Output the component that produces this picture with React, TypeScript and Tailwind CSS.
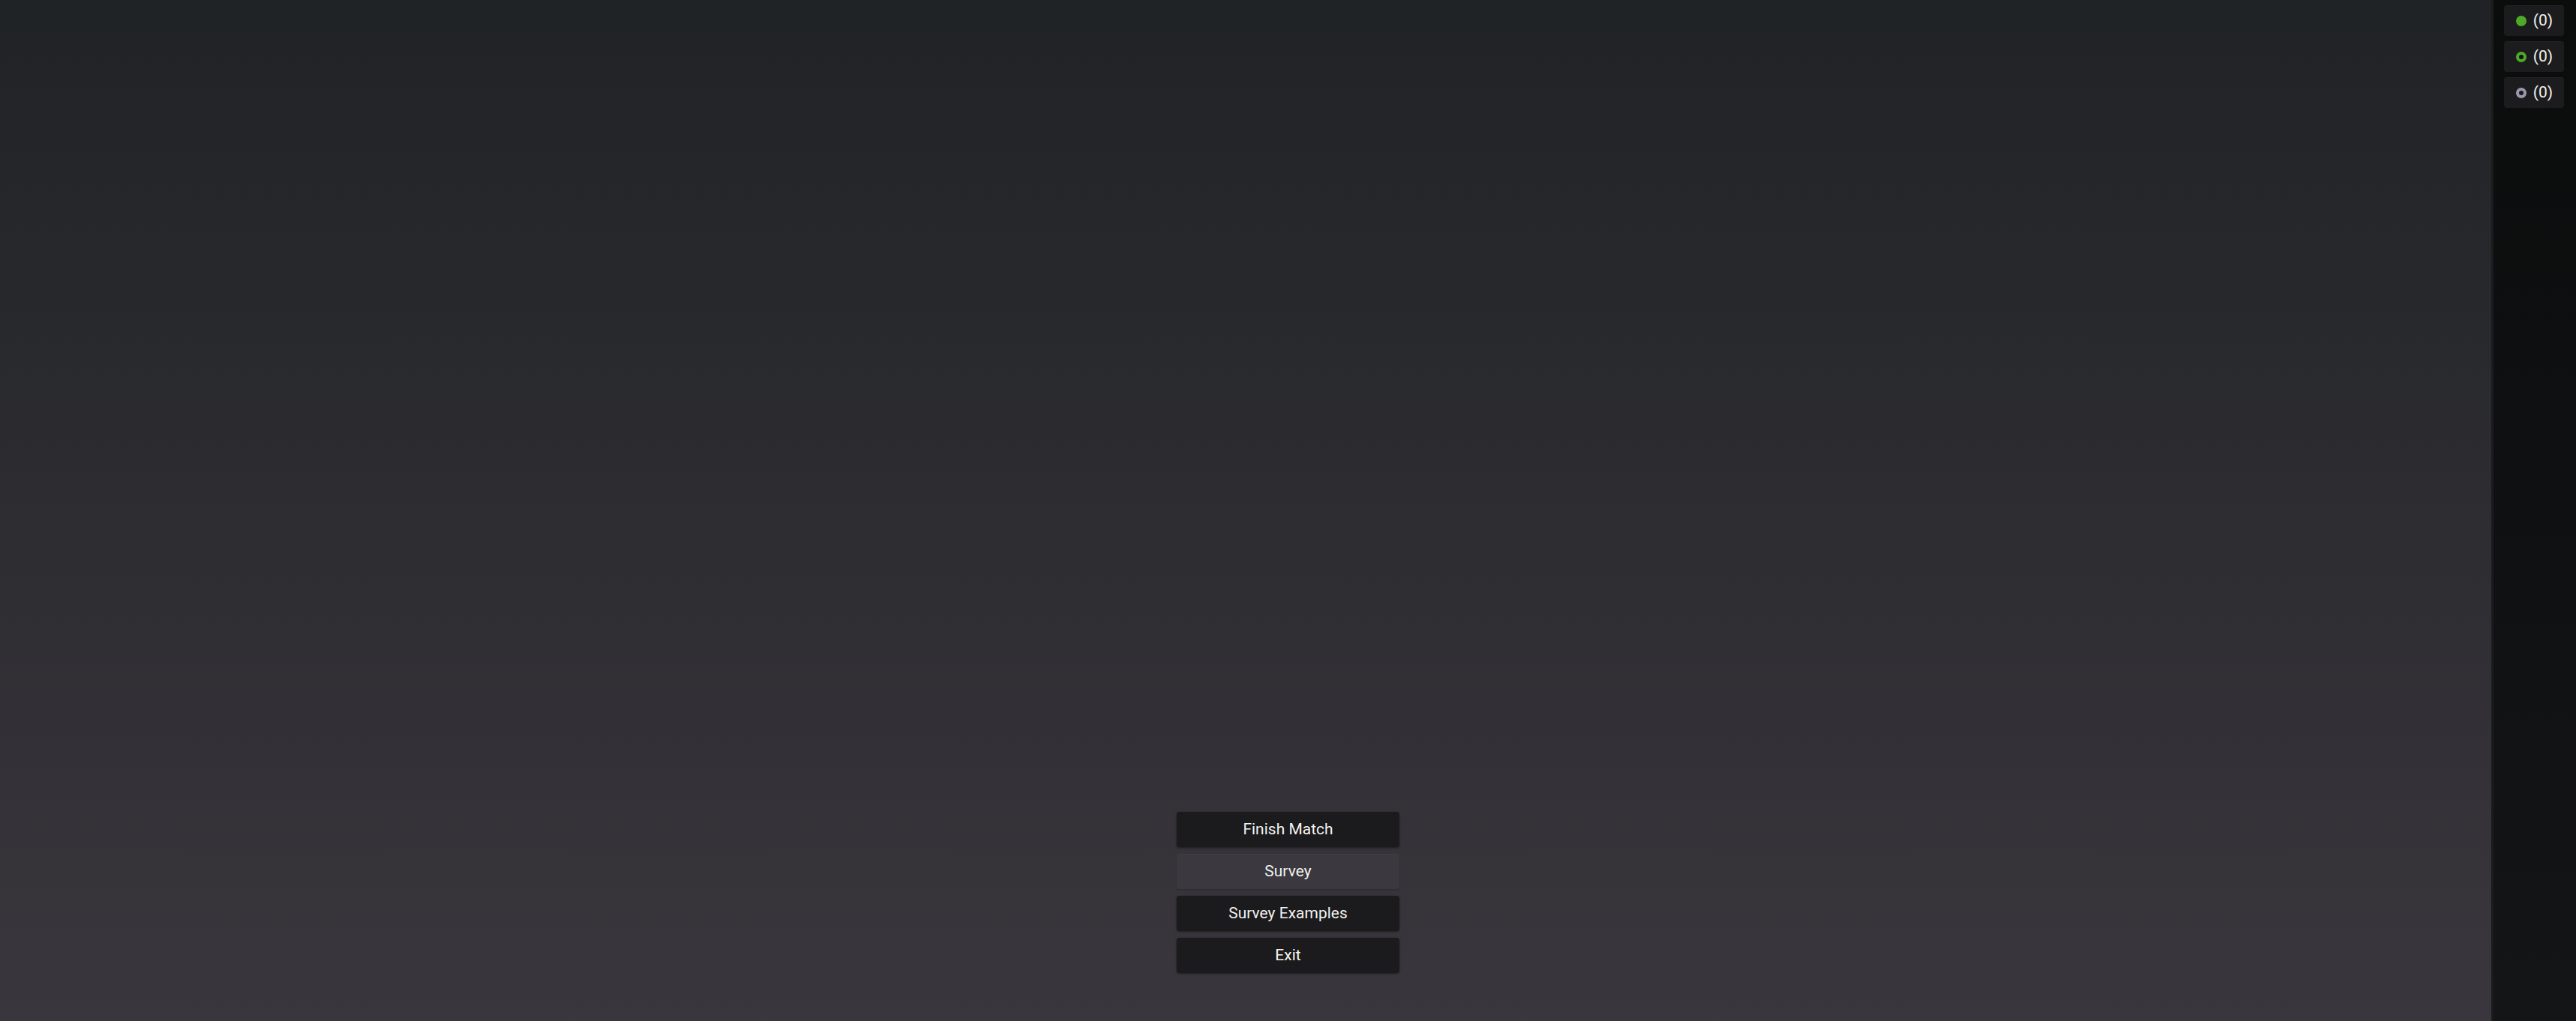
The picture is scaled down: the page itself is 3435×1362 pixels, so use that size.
import React from 'react';

const COUNTERS = [
  { kind: 'solid', count: 0 },
  { kind: 'ring-green', count: 0 },
  { kind: 'ring-grey', count: 0 },
];

const MENU = [
  { label: 'Finish Match', active: false },
  { label: 'Survey', active: true },
  { label: 'Survey Examples', active: false },
  { label: 'Exit', active: false },
];

function Dot({ kind }: { kind: string }) {
  if (kind === 'solid') {
    return <span className="block w-[16px] h-[16px] rounded-full bg-[#4ea82b] border border-[#10200a]" />;
  }
  if (kind === 'ring-green') {
    return (
      <span className="flex items-center justify-center w-[16px] h-[16px] rounded-full bg-[#4ea82b] border border-[#10200a]">
        <span className="block w-[6px] h-[6px] rounded-full bg-[#141414]" />
      </span>
    );
  }
  return (
    <span className="flex items-center justify-center w-[16px] h-[16px] rounded-full bg-[#9a97a9] border border-[#1a1a1f]">
      <span className="block w-[6px] h-[6px] rounded-full bg-[#1a1a1e]" />
    </span>
  );
}

export default function App() {
  return (
    <div
      className="relative w-full h-[1362px] overflow-hidden bg-gradient-to-b from-[#202326] to-[#3a363d]"
      style={{ fontFamily: 'Roboto, "Noto Sans", sans-serif' }}
    >
      {/* Menu */}
      <div className="flex flex-col items-center justify-end h-full pb-[64px] gap-[9px]">
        {MENU.map(item => (
          <button
            key={item.label}
            className={`w-[297px] h-[47px] rounded-[4px] text-[21px] text-[#f4f2ec] flex items-center justify-center ${
              item.active
                ? 'bg-[#3b393f] border-t border-[#403e44] shadow-[0_1px_2px_rgba(0,0,0,0.2)]'
                : 'bg-[#1b1a1d] shadow-[0_1px_3px_rgba(0,0,0,0.45)]'
            }`}
          >
            {item.label}
          </button>
        ))}
      </div>

      {/* Side counters */}
      <div className="absolute top-0 right-0 h-full w-[113px] bg-gradient-to-b from-[#0b0c0c] to-[#141517] border-l-[3px] border-[#1a1b1d] pl-[14px] pr-[16px] pt-[7px] flex flex-col gap-[7px]">
        {COUNTERS.map((c, i) => (
          <div
            key={i}
            className="h-[41px] rounded-[4px] bg-[#1c1c1e] border-t border-[#232325] flex items-center justify-center gap-[8px] text-[21px] text-[#f4f2ec]"
          >
            <Dot kind={c.kind} />
            <span>({c.count})</span>
          </div>
        ))}
      </div>
    </div>
  );
}
